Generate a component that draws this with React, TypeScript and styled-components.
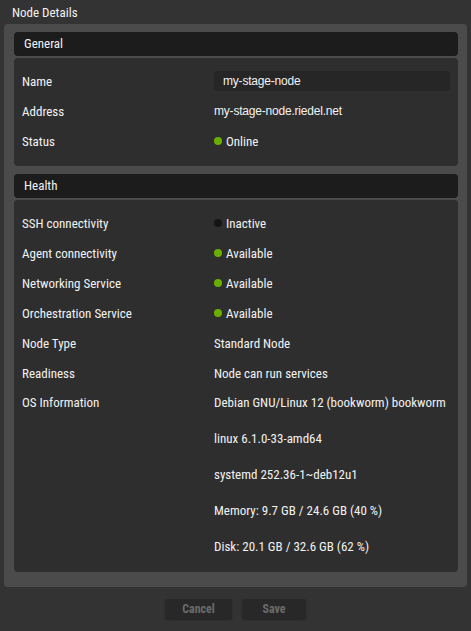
import styled, { createGlobalStyle } from 'styled-components';

const GlobalStyle = createGlobalStyle`
  html, body {
    margin: 0;
    padding: 0;
    background: #333333;
  }
  body {
    font-family: Roboto, "Liberation Sans", sans-serif;
    font-stretch: 80%;
    font-size: 13px;
    color: #f2f2f2;
  }
`;

const Page = styled.div`
  display: flex;
  flex-direction: column;
  width: 471px;
  height: 631px;
  padding: 0 4px;
  box-sizing: border-box;
`;

const Title = styled.div`
  height: 24px;
  padding-left: 8px;
  line-height: 26px;
  font-size: 13px;
`;

const Panel = styled.div`
  display: flex;
  flex-direction: column;
  gap: 8px;
  padding: 8px 9px 15px 10px;
  border-radius: 4px;
  background-color: #4b4b4b;
`;

const Section = styled.div`
  display: flex;
  flex-direction: column;
  gap: 2px;
`;

const SectionHeader = styled.div`
  height: 24px;
  padding-left: 10px;
  line-height: 24px;
  border-radius: 4px;
  background-color: #1c1c1c;
`;

const SectionBody = styled.div`
  display: grid;
  grid-template-columns: 192px 1fr;
  grid-auto-rows: minmax(30px, auto);
  align-items: center;
  padding: 8px 8px 10px 8px;
  border-radius: 4px;
  background-color: #2e2e2e;
`;

const Label = styled.div`
  white-space: nowrap;
`;

const Value = styled.div<{ $plain?: boolean }>`
  display: flex;
  align-items: center;
  gap: 4px;
  white-space: nowrap;
  font-family: ${(p) => (p.$plain ? '"Liberation Sans", Arial, sans-serif' : 'inherit')};
  font-stretch: ${(p) => (p.$plain ? '100%' : 'inherit')};
  font-size: ${(p) => (p.$plain ? '12px' : 'inherit')};
  letter-spacing: ${(p) => (p.$plain ? '-0.2px' : 'normal')};
`;

const Input = styled.input`
  height: 20px;
  width: 100%;
  box-sizing: border-box;
  padding: 0 9px;
  border: none;
  outline: none;
  border-radius: 3px;
  background-color: #262626;
  color: #f2f2f2;
  font-family: "Liberation Sans", Arial, sans-serif;
  font-size: 12px;
  letter-spacing: -0.2px;
`;

const Dot = styled.span<{ $color: string }>`
  width: 8px;
  height: 8px;
  border-radius: 50%;
  background-color: ${(p) => p.$color};
`;

const OsList = styled.div`
  align-self: start;
  display: flex;
  flex-direction: column;
  padding: 7px 0;
  gap: 20px;
  line-height: 16px;
  white-space: nowrap;
`;

const OsLabel = styled(Label)`
  align-self: start;
  padding-top: 7px;
  line-height: 16px;
`;

const Footer = styled.div`
  display: flex;
  justify-content: center;
  gap: 10px;
  padding-top: 12px;
`;

const Button = styled.button<{ $width: number }>`
  width: ${(p) => p.$width}px;
  height: 20px;
  padding: 0;
  border: none;
  border-radius: 3px;
  background-color: #282828;
  box-shadow: 0 1px 2px rgba(0, 0, 0, 0.3);
  color: #6b6b6b;
  font-family: Roboto, sans-serif;
  font-stretch: 80%;
  font-size: 12px;
  font-weight: 700;
  cursor: default;
`;

const GREEN = '#6aae00';

const health: [string, string, string?][] = [
  ['SSH connectivity', 'Inactive', '#141414'],
  ['Agent connectivity', 'Available', GREEN],
  ['Networking Service', 'Available', GREEN],
  ['Orchestration Service', 'Available', GREEN],
  ['Node Type', 'Standard Node'],
  ['Readiness', 'Node can run services'],
];

const osInfo = [
  'Debian GNU/Linux 12 (bookworm) bookworm',
  'linux 6.1.0-33-amd64',
  'systemd 252.36-1~deb12u1',
  'Memory: 9.7 GB / 24.6 GB (40 %)',
  'Disk: 20.1 GB / 32.6 GB (62 %)',
];

export default function App() {
  return (
    <>
      <GlobalStyle />
      <Page>
        <Title>Node Details</Title>
        <Panel>
          <Section>
            <SectionHeader>General</SectionHeader>
            <SectionBody>
              <Label>Name</Label>
              <Value>
                <Input defaultValue='my-stage-node' />
              </Value>
              <Label>Address</Label>
              <Value $plain>my-stage-node.riedel.net</Value>
              <Label>Status</Label>
              <Value>
                <Dot $color={GREEN} />
                Online
              </Value>
            </SectionBody>
          </Section>
          <Section>
            <SectionHeader>Health</SectionHeader>
            <SectionBody>
              {health.map(([label, value, dot]) => [
                <Label key={label}>{label}</Label>,
                <Value key={label + '-v'}>
                  {dot && <Dot $color={dot} />}
                  {value}
                </Value>,
              ])}
              <OsLabel>OS Information</OsLabel>
              <OsList>
                {osInfo.map((line) => (
                  <span key={line}>{line}</span>
                ))}
              </OsList>
            </SectionBody>
          </Section>
        </Panel>
        <Footer>
          <Button $width={67}>Cancel</Button>
          <Button $width={64}>Save</Button>
        </Footer>
      </Page>
    </>
  );
}
